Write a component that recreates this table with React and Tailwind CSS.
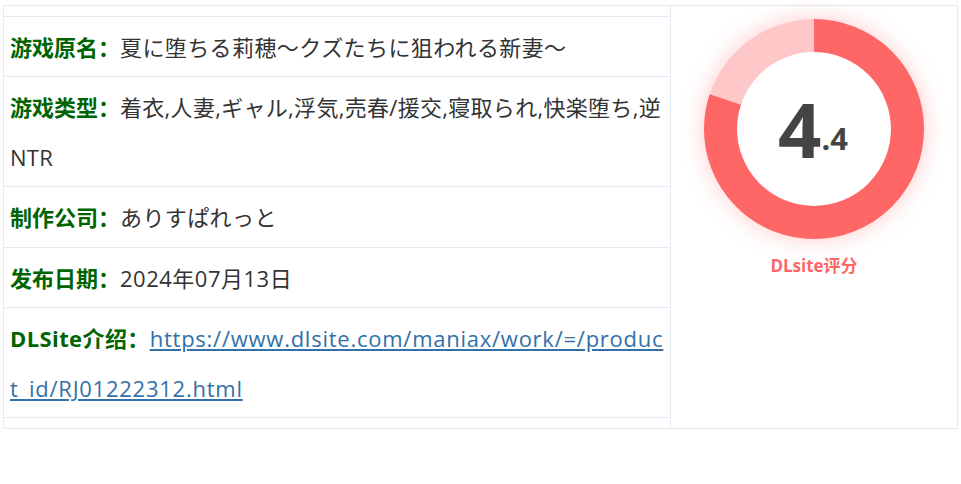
import React from "react";

const FONT = { fontFamily: '"Open Sans", "Noto Sans CJK SC", sans-serif' };

function Row({ label, children, first, labelClass = "", pad = "py-[4.5px]", pr = "pr-[2px]" }) {
  return (
    <div className={`pl-[6px] ${pr} ${pad} text-[22px] leading-[50px] border-b border-[#e3ebf4] ${first ? "border-t" : ""}`}>
      <span className={`font-bold text-[#006400] ${labelClass}`}>{label}</span>
      {children}
    </div>
  );
}

function Donut() {
  const r = 93.5;
  const c = 2 * Math.PI * r;
  const red = c * 0.8;
  return (
    <div className="relative w-[220px] h-[220px] rounded-full shadow-[0_0_22px_rgba(255,102,102,0.35)]">
      <svg width="220" height="220" viewBox="0 0 220 220" className="absolute inset-0">
        <circle cx="110" cy="110" r={r} fill="none" stroke="#ffc8c8" strokeWidth="33" />
        <circle
          cx="110"
          cy="110"
          r={r}
          fill="none"
          stroke="#ff6666"
          strokeWidth="33"
          strokeDasharray={`${red} ${c}`}
          transform="rotate(-90 110 110)"
        />
      </svg>
      <div className="absolute inset-0 flex items-center justify-center">
        <div className="flex items-end text-[#444] font-bold mr-[2px]" style={{ fontFamily: '"Open Sans", sans-serif' }}>
          <span className="text-[76px] leading-none">4</span>
          <span className="text-[31px] leading-none mb-[13px]">.4</span>
        </div>
      </div>
    </div>
  );
}

export default function App() {
  return (
    <div className="w-[961px] h-[484px] bg-white pt-[5px] pl-[3px] text-[#333]" style={FONT}>
      <div className="w-[955px] h-[424px] border border-[#e3ebf4] flex">
        <div className="w-[666px] py-[10px]">
          <Row label="游戏原名：" first>
            <span className="tracking-[0.4px]">夏に堕ちる莉穂～クズたちに狙われる新妻～</span>
          </Row>
          <Row label="游戏类型：">
            <span className="tracking-[0.3px]">着衣,人妻,ギャル,浮気,売春/援交,寝取られ,快楽堕ち,逆NTR</span>
          </Row>
          <Row label="制作公司：" pad="pt-[5px] pb-[5px]">
            <span className="tracking-[0.4px]">ありすぱれっと</span>
          </Row>
          <Row label="发布日期：">
            <span className="tracking-[0.5px]">2024年07月13日</span>
          </Row>
          <Row label="DLSite介绍：" labelClass="tracking-[0.4px]">
            <a href="#" className="text-[#3370a8] underline break-all tracking-[0.75px]">
              https://www.dlsite.com/maniax/work/=/produc<br />t_id/RJ01222312.html
            </a>
          </Row>
        </div>
        <div className="flex-1 border-l border-[#e3ebf4] flex flex-col items-center pt-[13px]">
          <Donut />
          <div className="mt-[16px] text-[17px] font-bold text-[#ff6666] leading-[22px]">DLsite评分</div>
        </div>
      </div>
    </div>
  );
}
